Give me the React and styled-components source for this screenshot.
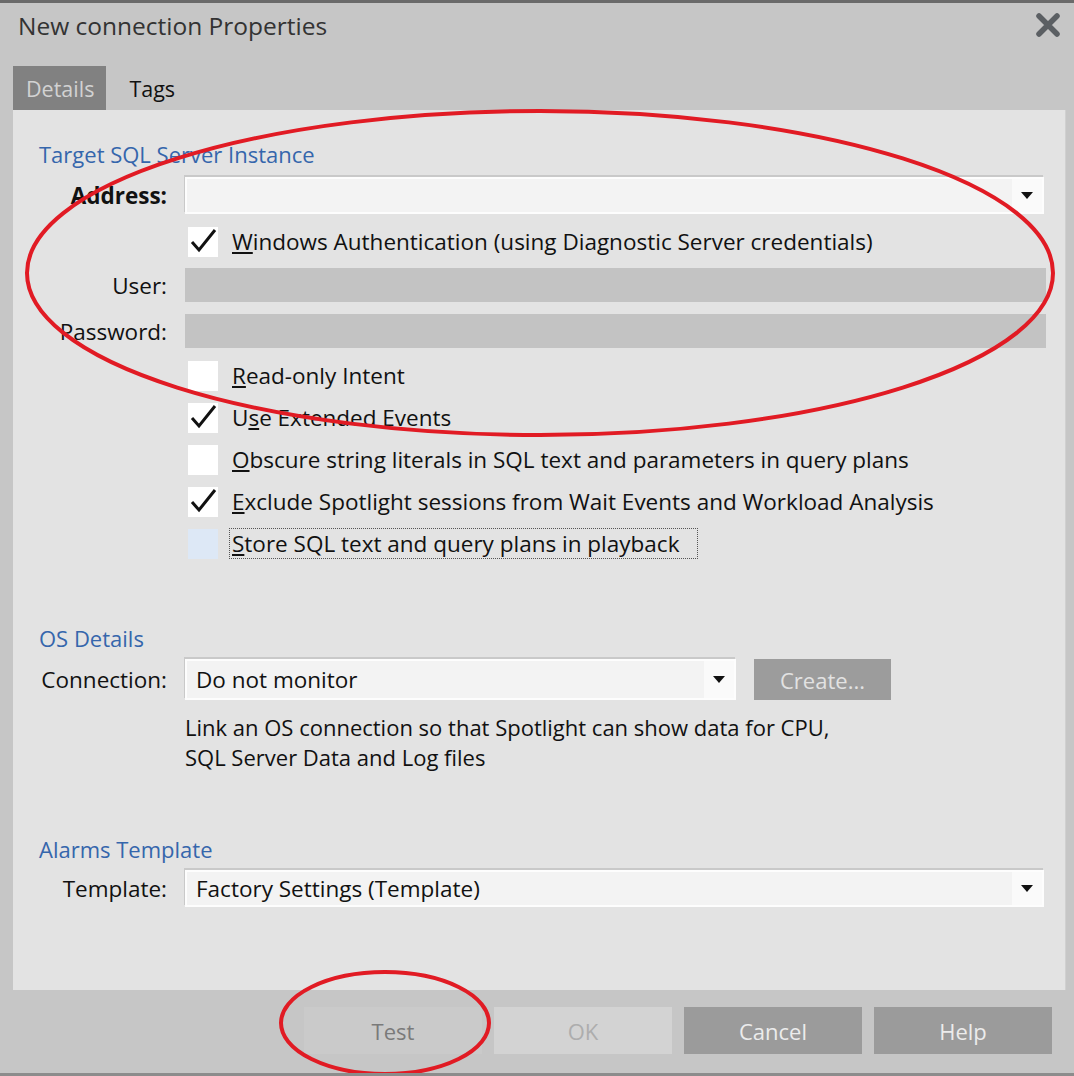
import React from "react";
import styled, { createGlobalStyle } from "styled-components";

const GlobalStyle = createGlobalStyle`
    html, body {
        margin: 0;
        padding: 0;
        background: #c6c6c6;
    }
    body {
        font-family: "Open Sans", "Noto Sans", "Liberation Sans", sans-serif;
    }
`;

const CloseIcon = () => (
    <svg width="26" height="26" viewBox="0 0 26 26">
        <path d="M4 4 L22 22 M22 4 L4 22" stroke="#5b5f63" strokeWidth="5.5" strokeLinecap="round" />
    </svg>
);

const CheckIcon = () => (
    <svg width="30" height="30" viewBox="0 0 30 30">
        <path d="M4 15 L11 23 L27 3" fill="none" stroke="#111" strokeWidth="3" strokeLinejoin="miter" />
    </svg>
);

const Arrow = () => (
    <svg width="12" height="8" viewBox="0 0 12 8">
        <path d="M0 0 L12 0 L6 7 Z" fill="#111" />
    </svg>
);

const Combo = ({ value, width }) => (
    <ComboBox $width={width}>
        <ComboText>{value}</ComboText>
        <ComboArrow>
            <Arrow />
        </ComboArrow>
    </ComboBox>
);

const CheckRow = ({ checked, focused, children }) => (
    <Row $height={30} $gap={12}>
        <span />
        <CheckLine>
            <Box $focused={focused}>{checked && <CheckIcon />}</Box>
            <CheckLabel $focused={focused}>{children}</CheckLabel>
        </CheckLine>
    </Row>
);

const App = () => {
    return (
        <>
            <GlobalStyle />
            <Dialog>
                <TitleBar>
                    <Title>New connection Properties</Title>
                    <CloseButton>
                        <CloseIcon />
                    </CloseButton>
                </TitleBar>
                <Tabs>
                    <Tab $active>Details</Tab>
                    <Tab>Tags</Tab>
                </Tabs>
                <Panel>
                    <Heading>Target SQL Server Instance</Heading>
                    <Row $height={37} $gap={10}>
                        <Label $bold>Address:</Label>
                        <Combo value="" />
                    </Row>
                    <CheckRow checked>
                        <u>W</u>indows Authentication (using Diagnostic Server credentials)
                    </CheckRow>
                    <Row $height={34} $gap={12}>
                        <Label>User:</Label>
                        <DisabledInput />
                    </Row>
                    <Row $height={34} $gap={12}>
                        <Label>Password:</Label>
                        <DisabledInput />
                    </Row>
                    <CheckRow>
                        <u>R</u>ead-only Intent
                    </CheckRow>
                    <CheckRow checked>
                        U<u>s</u>e Extended Events
                    </CheckRow>
                    <CheckRow>
                        <u>O</u>bscure string literals in SQL text and parameters in query plans
                    </CheckRow>
                    <CheckRow checked>
                        <u>E</u>xclude Spotlight sessions from Wait Events and Workload Analysis
                    </CheckRow>
                    <CheckRow focused>
                        <u>S</u>tore SQL text and query plans in playback
                    </CheckRow>

                    <Heading $gap={67}>OS Details</Heading>
                    <Row $height={41} $gap={8}>
                        <Label>Connection:</Label>
                        <ComboLine>
                            <Combo value="Do not monitor" width={551} />
                            <CreateButton>Create...</CreateButton>
                        </ComboLine>
                    </Row>
                    <Row $gap={12}>
                        <span />
                        <Hint>
                            <HintLine>Link an OS connection so that Spotlight can show data for CPU,</HintLine>
                            <HintLine>SQL Server Data and Log files</HintLine>
                        </Hint>
                    </Row>

                    <Heading $gap={64}>Alarms Template</Heading>
                    <Row $height={37} $gap={8}>
                        <Label>Template:</Label>
                        <Combo value="Factory Settings (Template)" />
                    </Row>
                </Panel>
                <Footer>
                    <Button $kind="ghost">Test</Button>
                    <Button $kind="disabled">OK</Button>
                    <Button>Cancel</Button>
                    <Button>Help</Button>
                </Footer>
                <Marks viewBox="0 0 1074 1076">
                    <ellipse cx="540" cy="270" rx="513" ry="162" fill="none" stroke="#e11b24" strokeWidth="4" />
                    <ellipse cx="385" cy="1020" rx="104" ry="51" fill="none" stroke="#e11b24" strokeWidth="4" />
                </Marks>
            </Dialog>
        </>
    );
};

const Dialog = styled.div`
    position: relative;
    width: 1074px;
    height: 1076px;
    box-sizing: border-box;
    background: #c6c6c6;
    border-top: 3px solid #6a6a6a;
    border-bottom: 3px solid #8c8c8c;
    display: flex;
    flex-direction: column;
    overflow: hidden;
`;

const TitleBar = styled.div`
    height: 44px;
    padding: 0 13px 0 18px;
    display: flex;
    align-items: center;
    justify-content: space-between;
`;

const Title = styled.div`
    font-size: 24.5px;
    color: #333;
`;

const CloseButton = styled.div`
    display: flex;
    align-items: center;
`;

const Tabs = styled.div`
    display: flex;
    align-items: stretch;
    height: 44px;
    margin-top: 19px;
    padding-left: 13px;
`;

const Tab = styled.div`
    display: flex;
    align-items: center;
    padding: 0 12px 0 13px;
    margin-right: 10px;
    font-size: 21.5px;
    background: ${(p) => (p.$active ? "#818181" : "transparent")};
    color: ${(p) => (p.$active ? "#d2d2d2" : "#111")};
`;

const Panel = styled.div`
    height: 880px;
    box-sizing: border-box;
    margin: 0 8px 0 13px;
    padding: 31px 21px 0 0;
    background: #e3e3e3;
    border-right: 1px solid #d0d0d0;
`;

const Heading = styled.div`
    margin-top: ${(p) => p.$gap || 0}px;
    padding-left: 26px;
    font-size: 22px;
    line-height: 26px;
    color: #3566ac;
`;

const Row = styled.div`
    display: grid;
    grid-template-columns: 154px 1fr;
    column-gap: 18px;
    align-items: center;
    margin-top: ${(p) => p.$gap || 0}px;
    height: ${(p) => (p.$height ? `${p.$height}px` : "auto")};
`;

const Label = styled.div`
    text-align: right;
    font-size: 22.5px;
    font-weight: ${(p) => (p.$bold ? 700 : 400)};
    color: #111;
    white-space: nowrap;
`;

const ComboBox = styled.div`
    height: 100%;
    width: ${(p) => (p.$width ? `${p.$width}px` : "100%")};
    box-sizing: border-box;
    display: flex;
    align-items: center;
    background: #f3f3f3;
    border: 2px solid #fdfdfd;
    box-shadow: -1px -2px 0 #c9c9c9;
`;

const ComboText = styled.div`
    flex: 1;
    padding-left: 9px;
    font-size: 22.5px;
    color: #111;
`;

const ComboArrow = styled.div`
    width: 30px;
    align-self: stretch;
    background: #fafafa;
    display: flex;
    align-items: center;
    justify-content: center;
`;

const ComboLine = styled.div`
    display: flex;
    gap: 18px;
    height: 100%;
`;

const CreateButton = styled.div`
    width: 137px;
    display: flex;
    align-items: center;
    justify-content: center;
    background: #9c9c9c;
    color: #e2e2e2;
    font-size: 22px;
`;

const DisabledInput = styled.div`
    height: 100%;
    margin-right: -2px;
    background: #c3c3c3;
`;

const CheckLine = styled.div`
    display: flex;
    align-items: center;
    gap: 11px;
    padding-left: 3px;
    height: 100%;
`;

const Box = styled.div`
    width: 30px;
    height: 30px;
    background: ${(p) => (p.$focused ? "#dde8f6" : "#fff")};
    display: flex;
    align-items: center;
    justify-content: center;
`;

const CheckLabel = styled.div`
    font-size: 22.5px;
    color: #111;
    line-height: 29px;
    padding: 0 18px 0 2px;
    border: 1px dotted ${(p) => (p.$focused ? "#555" : "transparent")};
    white-space: nowrap;
`;

const Hint = styled.div`
    display: flex;
    flex-direction: column;
    gap: 0;
`;

const HintLine = styled.div`
    font-size: 22px;
    line-height: 30px;
    color: #111;
    white-space: nowrap;
`;

const Footer = styled.div`
    display: flex;
    justify-content: flex-end;
    gap: 12px;
    padding: 17px 22px 0 0;
`;

const Button = styled.div`
    width: 178px;
    height: 47px;
    display: flex;
    align-items: center;
    justify-content: center;
    font-size: 22px;
    background: ${(p) =>
        p.$kind === "ghost" ? "#cacaca" : p.$kind === "disabled" ? "#d3d3d3" : "#9b9b9b"};
    color: ${(p) =>
        p.$kind === "ghost" ? "#7a7a7a" : p.$kind === "disabled" ? "#adadad" : "#ececec"};
`;

const Marks = styled.svg`
    position: absolute;
    left: 0;
    top: 0;
    width: 1074px;
    height: 1076px;
    pointer-events: none;
`;

export default App;
